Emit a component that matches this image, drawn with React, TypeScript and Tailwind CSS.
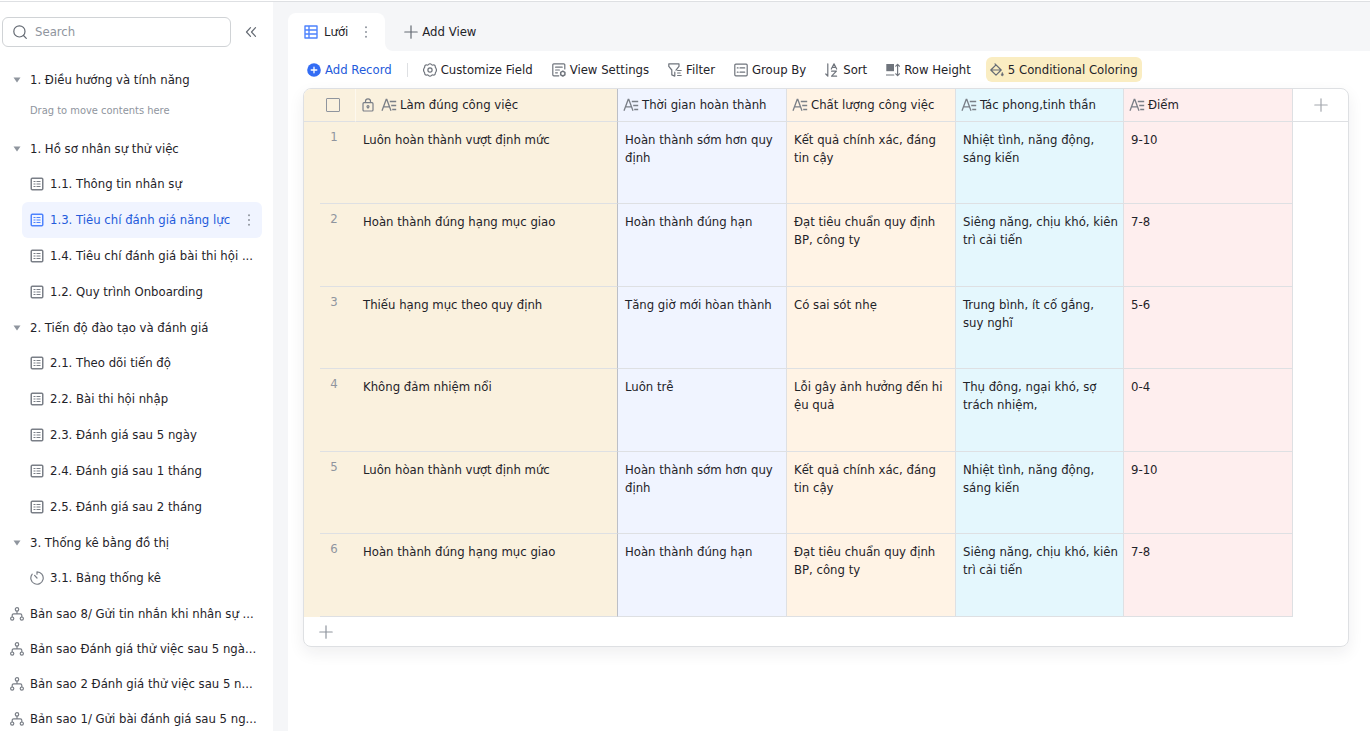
import type { ReactNode } from "react";
import clsx from "clsx";

type NavKind = "table" | "dashboard" | "flow";

type NavItem = {
  label: string;
  kind: NavKind;
  active?: boolean;
};

type NavGroup = {
  label: string;
  items: NavItem[];
};

const groups: NavGroup[] = [
  { label: "1. Điều hướng và tính năng", items: [] },
  {
    label: "1. Hồ sơ nhân sự thử việc",
    items: [
      { label: "1.1. Thông tin nhân sự", kind: "table" },
      { label: "1.3. Tiêu chí đánh giá năng lực", kind: "table", active: true },
      { label: "1.4. Tiêu chí đánh giá bài thi hội ...", kind: "table" },
      { label: "1.2. Quy trình Onboarding", kind: "table" },
    ],
  },
  {
    label: "2. Tiến độ đào tạo và đánh giá",
    items: [
      { label: "2.1. Theo dõi tiến độ", kind: "table" },
      { label: "2.2. Bài thi hội nhập", kind: "table" },
      { label: "2.3. Đánh giá sau 5 ngày", kind: "table" },
      { label: "2.4. Đánh giá sau 1 tháng", kind: "table" },
      { label: "2.5. Đánh giá sau 2 tháng", kind: "table" },
    ],
  },
  {
    label: "3. Thống kê bằng đồ thị",
    items: [{ label: "3.1. Bảng thống kê", kind: "dashboard" }],
  },
];

const flows = [
  "Bản sao 8/ Gửi tin nhắn khi nhân sự ...",
  "Bản sao Đánh giá thử việc sau 5 ngà...",
  "Bản sao 2 Đánh giá thử việc sau 5 n...",
  "Bản sao 1/ Gửi bài đánh giá sau 5 ng...",
];

const columns = [
  { title: "Làm đúng công việc", locked: true, color: "bg-[#faf1de]", border: "border-r-[#bcbfc6]" },
  { title: "Thời gian hoàn thành", color: "bg-[#f0f4ff]", border: "border-r-[#dee0e3]" },
  { title: "Chất lượng công việc", color: "bg-[#fff3e5]", border: "border-r-[#dee0e3]" },
  { title: "Tác phong,tinh thần", color: "bg-[#e4f7fd]", border: "border-r-[#dee0e3]" },
  { title: "Điểm", color: "bg-[#feeeee]", border: "border-r-[#dee0e3]" },
];

const rows = [
  ["Luôn hoàn thành vượt định mức", "Hoàn thành sớm hơn quy\nđịnh", "Kết quả chính xác, đáng\ntin cậy", "Nhiệt tình, năng động,\nsáng kiến", "9-10"],
  ["Hoàn thành đúng hạng mục giao", "Hoàn thành đúng hạn", "Đạt tiêu chuẩn quy định\nBP, công ty", "Siêng năng, chịu khó, kiên\ntrì cải tiến", "7-8"],
  ["Thiếu hạng mục theo quy định", "Tăng giờ mới hòan thành", "Có sai sót nhẹ", "Trung bình, ít cố gắng,\nsuy nghĩ", "5-6"],
  ["Không đảm nhiệm nổi", "Luôn trễ", "Lỗi gây ảnh hưởng đến hi\nệu quả", "Thụ đông, ngại khó, sợ\ntrách nhiệm,", "0-4"],
  ["Luôn hòan thành vượt định mức", "Hoàn thành sớm hơn quy\nđịnh", "Kết quả chính xác, đáng\ntin cậy", "Nhiệt tình, năng động,\nsáng kiến", "9-10"],
  ["Hoàn thành đúng hạng mục giao", "Hoàn thành đúng hạn", "Đạt tiêu chuẩn quy định\nBP, công ty", "Siêng năng, chịu khó, kiên\ntrì cải tiến", "7-8"],
];

function Icon({ children, className = "size-3.5" }: { children: ReactNode; className?: string }) {
  return (
    <svg
      viewBox="0 0 14 14"
      fill="none"
      stroke="currentColor"
      strokeWidth="1.2"
      strokeLinecap="round"
      strokeLinejoin="round"
      className={clsx("shrink-0", className)}
      aria-hidden="true"
    >
      {children}
    </svg>
  );
}

const TableIcon = () => (
  <Icon>
    <rect x="1.25" y="1.25" width="11.5" height="11.5" rx="1" strokeWidth="1.5" />
    <path d="M3.5 4.5h2M6.5 4.5h4M3.5 7h2M6.5 7h4M3.5 9.5h2M6.5 9.5h4" strokeLinecap="butt" />
  </Icon>
);

const DashboardIcon = () => (
  <Icon>
    <path d="M7 .8v2.4M7 .8a6.2 6.2 0 1 1-4.8 2.3M4.6 4.4 7 7" />
  </Icon>
);

const FlowIcon = () => (
  <Icon>
    <circle cx="7" cy="2.4" r="1.7" />
    <circle cx="2.2" cy="11.6" r="1.6" />
    <circle cx="11.8" cy="11.6" r="1.6" />
    <path d="M7 4.2v2.6M2.2 9.8V8.3c0-.9.6-1.5 1.5-1.5h6.6c.9 0 1.5.6 1.5 1.5v1.5" />
  </Icon>
);

const TextFieldIcon = () => (
  <svg viewBox="0 0 16 14" fill="none" stroke="currentColor" strokeWidth="1.3" className="h-3.5 w-4 shrink-0 text-[#7a7f87]" aria-hidden="true">
    <path d="M1 12.8 5.2 1.5h.6L10 12.8M2.6 8.8h5.8M8.8 3.5h6.4M10.2 7.5h5M11.2 11.5h4" />
  </svg>
);

const PlusIcon = () => (
  <Icon>
    <path d="M7 .8v12.4M.8 7h12.4" />
  </Icon>
);

const MoreIcon = () => (
  <svg viewBox="0 0 14 14" fill="#8f959e" className="size-3.5 shrink-0" aria-hidden="true">
    <circle cx="7" cy="2.2" r="1" />
    <circle cx="7" cy="7" r="1" />
    <circle cx="7" cy="11.8" r="1" />
  </svg>
);

const navIcons: Record<NavKind, () => ReactNode> = {
  table: TableIcon,
  dashboard: DashboardIcon,
  flow: FlowIcon,
};

const tools = [
  {
    label: "Customize Field",
    icon: (
      <Icon>
        <path d="M5.4 1.6Q7-.1 8.6 1.6q.6.6 1.400.4 2.200-.5 2.300 1.700 0 .8.6 1.500 1.100 1.800 0 3.600-.6.700-.6 1.500-.1 2.200-2.300 1.700-.8-.2-1.400.4-1.600 1.700-3.200 0-.6-.6-1.400-.4-2.200.5-2.300-1.700 0-.8-.6-1.500-1.100-1.800 0-3.600.6-.7.6-1.500.1-2.200 2.300-1.700.8.2 1.400-.4z" />
        <circle cx="7" cy="7" r="2.1" />
      </Icon>
    ),
  },
  {
    label: "View Settings",
    icon: (
      <Icon>
        <path d="M12.8 6V1.8c0-.6-.4-1-1-1H1.8c-.6 0-1 .4-1 1v10c0 .6.4 1 1 1h5M3.6 4.2h6.6M3.6 7h3.8M3.6 9.8h1.8" />
        <path d="m10.8 8.2 2.100 1.200v2.400l-2.100 1.200-2.100-1.200V9.400z" strokeWidth="1.500" />
      </Icon>
    ),
  },
  {
    label: "Filter",
    icon: (
      <Icon>
        <path d="M8 7.2 11 3.400V.9H.8v2.500l3 3.600v4.900l3 1.200V9.200M9.600 7.500h3.600M9.600 10h2.600M9.600 12.500h3.600" />
      </Icon>
    ),
  },
  {
    label: "Group By",
    icon: (
      <Icon>
        <rect x=".8" y="1.200" width="12.400" height="11.600" rx="1" />
        <path d="M3.300 4.900h.8M6 4.900h4.700M3.300 9.200h.8M6 9.200h4.700" />
      </Icon>
    ),
  },
  {
    label: "Sort",
    icon: (
      <Icon>
        <path d="M2.800.8v12.400L.8 11M6.300 6 9 .8 11.700 6M7.200 4.300h3.600M6.600 8.200h4.800l-4.800 5h5" />
      </Icon>
    ),
  },
  {
    label: "Row Height",
    icon: (
      <Icon>
        <path d="M.3 1h7.700v7.200H.3z" fill="currentColor" stroke="none" />
        <path d="M.5 12h7.300M11.600 1.500v11M9.800 3.200l1.800-1.900 1.800 1.900M9.800 10.800l1.800 1.900 1.800-1.900" />
      </Icon>
    ),
  },
];

function NavLink({ item }: { item: NavItem }) {
  const ItemIcon = navIcons[item.kind];
  return (
    <a
      href="#"
      aria-current={item.active ? "page" : undefined}
      className={clsx(
        "ml-[22px] mr-[11px] flex h-9 items-center gap-[6px] rounded-md pl-2 pr-1.5",
        item.active && "bg-[#f0f4ff] text-[#245bdb]",
      )}
    >
      <span className={clsx("flex", item.active ? "text-[#4e83fd]" : "text-[#7a7f87]")}>
        <ItemIcon />
      </span>
      <span className="whitespace-nowrap">{item.label}</span>
      {item.active && (
        <span className="ml-auto">
          <MoreIcon />
        </span>
      )}
    </a>
  );
}

function Sidebar() {
  return (
    <aside className="flex w-[273px] shrink-0 flex-col bg-white">
      <div className="flex items-center pl-0.5 pr-3 pt-[15px]">
        <label className="flex h-[30px] w-[229px] items-center gap-2 rounded-md border border-[#d0d3d6] px-2.5">
          <Icon className="size-3.5 text-[#646a73]">
            <circle cx="6.4" cy="6.4" r="5.6" />
            <path d="m10.5 10.5 2.8 2.8" />
          </Icon>
          <input
            type="text"
            placeholder="Search"
            aria-label="Search"
            className="w-full min-w-0 bg-transparent outline-none placeholder:text-[#8f959e]"
          />
        </label>
        <button aria-label="Collapse sidebar" className="ml-[13px] text-[#646a73]">
          <Icon>
            <path d="M6.5 2.7 2.5 7l4 4.300M11.500 2.700 7.500 7l4 4.300" />
          </Icon>
        </button>
      </div>

      <nav className="mt-[15px]">
        {groups.map((group) => (
          <div key={group.label}>
            <button className="flex h-[35px] w-full items-center gap-[9px] pl-[13px] text-left">
              <svg viewBox="0 0 8 6" className="h-1.5 w-2 shrink-0 fill-[#8f959e]" aria-hidden="true">
                <path d="M.5.5h7L4 5.500z" />
              </svg>
              <span>{group.label}</span>
            </button>
            {group.items.length === 0 && (
              <p className="h-[34px] pl-[30px] pt-1.5 text-[11px] leading-4 text-[#8f959e]">Drag to move contents here</p>
            )}
            {group.items.map((item) => (
              <NavLink key={item.label} item={item} />
            ))}
          </div>
        ))}
        {flows.map((label) => (
          <a key={label} href="#" className="flex h-[35px] items-center gap-[6px] pl-2.5">
            <span className="flex text-[#7a7f87]">
              <FlowIcon />
            </span>
            <span className="whitespace-nowrap">{label}</span>
          </a>
        ))}
      </nav>
    </aside>
  );
}

function ViewTabs() {
  return (
    <div className="flex pt-[11px]">
      <div className="flex h-[38px] items-center rounded-t-lg bg-white pl-4 pr-3">
        <button className="flex items-center gap-[6px]">
          <Icon className="size-3.5 text-[#4e83fd]">
            <path d="M1 1h12v12H1zM1 5h12M1 9h12M5 1v12" strokeWidth="1.4" />
          </Icon>
          Lưới
        </button>
        <button aria-label="View options" className="ml-[11px]">
          <MoreIcon />
        </button>
      </div>
      {/* white behind the bar gives the tab its flared foot */}
      <div className="flex flex-1 bg-linear-to-b from-[#f5f6f8] from-50% to-white to-50%">
        <div className="flex flex-1 items-center rounded-bl-lg bg-[#f5f6f8] pl-[19px]">
          <button className="flex items-center gap-1">
            <span className="text-[#646a73]">
              <PlusIcon />
            </span>
            Add View
          </button>
        </div>
      </div>
    </div>
  );
}

function Toolbar() {
  return (
    <div className="flex h-[37px] items-center gap-[11px] pl-4 whitespace-nowrap">
      <button className="flex items-center gap-1 pl-[3px] pr-1 text-[#245bdb]">
        <svg viewBox="0 0 14 14" className="size-3.5 shrink-0" aria-hidden="true">
          <circle cx="7" cy="7" r="6.8" fill="#336df4" />
          <path d="M7 4.200v5.600M4.200 7h5.600" stroke="#fff" strokeWidth="1.300" strokeLinecap="round" />
        </svg>
        Add Record
      </button>
      <span className="h-3.5 w-px bg-[#dee0e3]" />
      {tools.map((tool) => (
        <button key={tool.label} className="flex items-center gap-1 pl-1 pr-1">
          <span className="text-[#6f747c]">{tool.icon}</span>
          {tool.label}
        </button>
      ))}
      <button className="flex h-[25px] items-center gap-1 rounded-md bg-[#faedc2] px-1">
        <Icon className="size-3.5 text-[#646a73]">
          <path d="M5 .8 11.200 7 6 12.200.8 7 6 1.800M.8 7h10.400" />
          <path d="M12.300 9.800c-.7 1-1 1.500-1 2a1 1 0 0 0 2 0c0-.5-.3-1-1-2z" fill="currentColor" strokeWidth=".6" />
        </Icon>
        5 Conditional Coloring
      </button>
    </div>
  );
}

function Grid() {
  return (
    <div className="ml-[15px] mr-[21px] overflow-hidden rounded-lg border border-[#dee0e3] shadow-[0_6px_16px_rgba(31,35,41,0.07)]">
      <table className="w-full table-fixed border-separate border-spacing-0 text-left">
        <colgroup>
          <col className="w-4" />
          <col className="w-9" />
          <col className="w-[262px]" />
          <col className="w-[169px]" />
          <col className="w-[169px]" />
          <col className="w-[168px]" />
          <col className="w-[169px]" />
          <col />
        </colgroup>
        <thead>
          <tr className="h-[33px]">
            <th className="border-b border-[#dee0e3] bg-[#faf1de] p-0" />
            <th className="border-b border-r border-b-[#dee0e3] border-r-[#fdf8ee] bg-[#faf1de] p-0">
              <input
                type="checkbox"
                aria-label="Select all records"
                className="ml-1.5 block size-3.5 appearance-none rounded-[1px] border border-[#8f959e]"
              />
            </th>
            {columns.map((col) => (
              <th
                key={col.title}
                className={clsx("border-b border-r border-b-[#dee0e3] p-0 pl-[5px] font-normal", col.color, col.border)}
              >
                <span className="flex items-center gap-[3px] whitespace-nowrap">
                  {col.locked && (
                    <Icon className="mr-[3px] size-3.5 text-[#7a7f87]">
                      <rect x="2" y="4.7" width="10" height="8.3" rx="1" />
                      <path d="M4.500 4.500V3.300a2.500 2.500 0 0 1 5 0v1.200M7 9.300v.9" />
                      <circle cx="7" cy="8.500" r="1" />
                    </Icon>
                  )}
                  <TextFieldIcon />
                  {col.title}
                </span>
              </th>
            ))}
            <th className="border-b border-[#dee0e3] p-0">
              <button aria-label="Add field" className="mx-auto block text-[#a3a7ad]">
                <PlusIcon />
              </button>
            </th>
          </tr>
        </thead>
        <tbody>
          {rows.map((cells, i) => (
            <tr key={i} className="h-[83px] align-top odd:h-[82px]">
              <td className="bg-[#faf1de] p-0" />
              <td className="border-b border-[#dee0e3] bg-[#faf1de] p-0 pr-2 pt-1.5 text-center leading-[18px] text-[#8f959e]">
                {i + 1}
              </td>
              {cells.map((text, c) => (
                <td
                  key={c}
                  className={clsx(
                    "border-b border-r border-b-[#dee0e3] p-0 pl-[7px] pt-[9px] leading-[18px] whitespace-pre",
                    columns[c].color,
                    columns[c].border,
                  )}
                >
                  {text}
                </td>
              ))}
              <td className="p-0" />
            </tr>
          ))}
        </tbody>
      </table>
      <button aria-label="Add record" className="flex h-[29px] w-full items-center pl-[15px] text-[#8f959e]">
        <PlusIcon />
      </button>
    </div>
  );
}

export default function App() {
  return (
    <div className="flex h-screen flex-col overflow-hidden bg-white pt-px font-['DejaVu_Sans_Condensed','Noto_Sans',sans-serif] text-[13px] text-[#1f2329]">
      <div className="flex min-h-0 flex-1 border-t border-[#dee0e3] bg-[#f5f6f8]">
        <Sidebar />
        <main className="ml-[15px] flex min-w-0 flex-1 flex-col">
          <ViewTabs />
          <div className="flex-1 bg-white">
            <Toolbar />
            <Grid />
          </div>
        </main>
      </div>
    </div>
  );
}
